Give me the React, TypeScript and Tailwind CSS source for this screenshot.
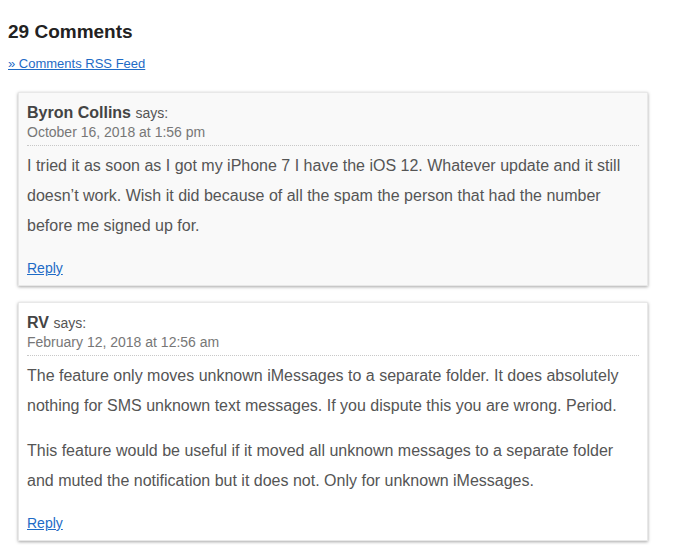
import React from 'react';

type Comment = {
    id: number;
    author: string;
    date: string;
    paragraphs: string[];
    alt?: boolean;
};

const comments: Comment[] = [
    {
        id: 1,
        author: 'Byron Collins',
        date: 'October 16, 2018 at 1:56 pm',
        paragraphs: [
            'I tried it as soon as I got my iPhone 7 I have the iOS 12. Whatever update and it still doesn\u2019t work. Wish it did because of all the spam the person that had the number before me signed up for.',
        ],
        alt: true,
    },
    {
        id: 2,
        author: 'RV',
        date: 'February 12, 2018 at 12:56 am',
        paragraphs: [
            'The feature only moves unknown iMessages to a separate folder. It does absolutely nothing for SMS unknown text messages. If you dispute this you are wrong. Period.',
            'This feature would be useful if it moved all unknown messages to a separate folder and muted the notification but it does not. Only for unknown iMessages.',
        ],
    },
];

const CommentCard: React.FC<{ c: Comment }> = ({ c }) => (
    <li
        className={`px-[8px] pt-[10px] pb-[7px] shadow-[0_1px_3px_rgba(0,0,0,0.35)] border border-[#e8e8e8] ${c.alt ? 'bg-[#f9f9f9]' : 'bg-white'}`}
    >
        <div className="border-b border-dotted border-[#c8c8c8] pb-[3px]">
            <div className="leading-5 text-[#444]">
                <span className="text-[16px] font-bold">{c.author}</span>{' '}
                <span className="text-[14px] text-[#555]">says:</span>
            </div>
            <div className="text-[14px] leading-[19px] text-[#777]">{c.date}</div>
        </div>
        <div className="mt-[5px] text-[16px] leading-[30px] text-[#555]">
            {c.paragraphs.map((p, i) => (
                <p key={i} className="mb-[15px]">{p}</p>
            ))}
        </div>
        {/* p margin collapses into this one */}
        <div className="mt-[17px] text-[14px] leading-5">
            <a href="#" className="text-[#1e6bc6] underline">Reply</a>
        </div>
    </li>
);

const App: React.FC = () => {
    return (
        <div className="bg-white min-h-[545px] px-2 pt-[20px] font-['Liberation_Sans',Arial,sans-serif]">
            <h3 className="text-[19px] leading-6 font-bold text-[#222]">29 Comments</h3>
            <a href="#" className="block mt-[11px] text-[13px] leading-[18px] text-[#1e6bc6] underline">
                » Comments RSS Feed
            </a>
            <ol className="mt-[19px] pl-[10px] pr-[24px] flex flex-col gap-[16px]">
                {comments.map(c => (
                    <CommentCard key={c.id} c={c} />
                ))}
            </ol>
        </div>
    );
};

export default App;
